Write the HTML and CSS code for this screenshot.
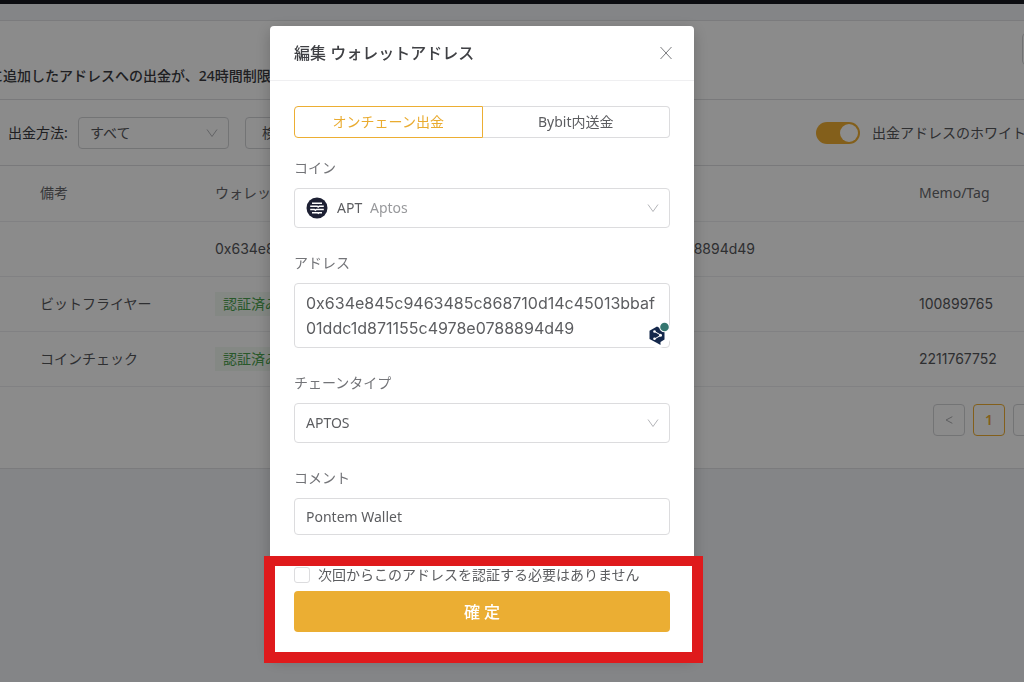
FILE: index.html
```html
<!DOCTYPE html>
<html lang="ja">
<head>
<meta charset="utf-8">
<meta name="viewport" content="width=device-width, initial-scale=1">
<title>ウォレットアドレス</title>
<link rel="stylesheet" href="styles.css">
</head>
<body>
<div class="page">
  <header class="topbar"></header>
  <main class="panel">
    <section class="banner">
      <p class="banner-text">に追加したアドレスへの出金が、24時間制限</p>
      <button class="banner-button" type="button" aria-label="追加"></button>
    </section>
    <section class="toolbar">
      <label class="toolbar-label" for="method">出金方法:</label>
      <span class="picker picker-small">
        <select id="method" class="picker-select"><option>すべて</option></select>
        <svg class="chevron" viewBox="0 0 12 12" aria-hidden="true"><path d="M1 2.5 6 9.5 11 2.5"/></svg>
      </span>
      <button class="search" type="button">検索</button>
      <div class="whitelist">
        <input class="switch" id="whitelist" type="checkbox" role="switch" checked>
        <label for="whitelist">出金アドレスのホワイトリスト</label>
      </div>
    </section>
    <table class="wallets">
      <colgroup><col class="col-note"><col><col class="col-memo"></colgroup>
      <thead><tr><th>備考</th><th>ウォレットアドレス</th><th>Memo/Tag</th></tr></thead>
      <tbody>
        <tr><td></td><td>0x634e845c9463485c868710d14c45013bbaf01ddc1d871155c4978e0788894d49</td><td></td></tr>
        <tr><td>ビットフライヤー</td><td><span class="tag">認証済み</span></td><td>100899765</td></tr>
        <tr><td>コインチェック</td><td><span class="tag">認証済み</span></td><td>2211767752</td></tr>
      </tbody>
    </table>
    <nav class="pages" aria-label="ページ">
      <button class="page-button" type="button" aria-label="前へ"><svg class="arrow" viewBox="0 0 12 12"><path d="M10 2 2.500 6 10 10"/></svg></button>
      <button class="page-button page-current" type="button">1</button>
      <button class="page-button" type="button" aria-label="次へ"><svg class="arrow" viewBox="0 0 12 12"><path d="M2 2 9.500 6 2 10"/></svg></button>
    </nav>
  </main>
</div>

<div class="overlay">
  <form class="modal" role="dialog" aria-labelledby="modal-title">
    <header class="modal-header">
      <h1 class="modal-title" id="modal-title">編集 ウォレットアドレス</h1>
      <button class="close" type="button" aria-label="閉じる"><svg viewBox="0 0 14 14"><path d="M1.500 1 12.500 13M12.500 1 1.500 13"/></svg></button>
    </header>
    <div class="modal-body">
      <div class="segments">
        <button class="segment segment-active" type="button">オンチェーン出金</button>
        <button class="segment" type="button">Bybit内送金</button>
      </div>
      <div class="field">
        <label for="coin">コイン</label>
        <span class="picker picker-coin">
          <select id="coin" class="picker-select"><option>APT</option></select>
          <span class="coin-name">Aptos</span>
          <svg class="coin-icon" viewBox="0 0 22 22" aria-hidden="true">
            <circle cx="11" cy="11" r="10.500" fill="#1d2033"/>
            <path d="M6 6.300h10M4.200 9.200h7l1 .9 1-.9h4.600M4.200 12.400h4.200l1 .9 1-.9h7.400M6 15.700h5.500l.8.600.8-.6H16" fill="none" stroke="#fff" stroke-width="1.500"/>
          </svg>
          <svg class="chevron" viewBox="0 0 12 12" aria-hidden="true"><path d="M1 2.500 6 9.500 11 2.500"/></svg>
        </span>
      </div>
      <div class="field">
        <label for="address">アドレス</label>
        <div class="address-box">
          <textarea id="address" class="address" rows="2" spellcheck="false">0x634e845c9463485c868710d14c45013bbaf01ddc1d871155c4978e0788894d49</textarea>
          <svg class="translate" viewBox="0 0 28 28" aria-hidden="true">
            <circle cx="14" cy="14" r="13" fill="#fff"/>
            <path d="M13 5.500 20.500 9.800V18.500L16.500 21V24L13 22 5.500 18V9.800Z" fill="#14284b"/>
            <path d="m10.500 10.500 6.500 3.700-6.500 3.800" fill="none" stroke="#fff" stroke-width="1"/>
            <circle cx="10.500" cy="10.500" r="1.300" fill="#fff"/><circle cx="16.500" cy="14.200" r="1.500" fill="#fff"/><circle cx="10.500" cy="17.800" r="1.300" fill="#fff"/>
            <circle cx="20.500" cy="6" r="5.300" fill="#fff"/><circle cx="20.500" cy="6" r="4.300" fill="#35766f"/>
          </svg>
        </div>
      </div>
      <div class="field">
        <label for="chain">チェーンタイプ</label>
        <span class="picker">
          <select id="chain" class="picker-select"><option>APTOS</option></select>
          <svg class="chevron" viewBox="0 0 12 12" aria-hidden="true"><path d="M1 2.500 6 9.500 11 2.500"/></svg>
        </span>
      </div>
      <div class="field">
        <label for="comment">コメント</label>
        <input id="comment" class="comment" type="text" value="Pontem Wallet">
      </div>
    </div>
    <footer class="modal-footer">
      <div class="agree">
        <input class="tick" id="skip" type="checkbox">
        <label for="skip">次回からこのアドレスを認証する必要はありません</label>
      </div>
      <button class="confirm" type="submit">確 定</button>
      <div class="highlight"></div>
    </footer>
  </form>
</div>
</body>
</html>
```
FILE: styles.css
```css
* { box-sizing: border-box; }

body {
  margin: 0;
  overflow: hidden;
  background: #f0f2f6;
  color: #55565a;
  font: 14px/20px "Noto Sans", "Noto Sans CJK JP", sans-serif;
}

button, input, select, textarea {
  font: inherit;
  color: inherit;
  margin: 0;
}

button { cursor: pointer; padding: 0; background: none; }
svg { display: block; fill: none; stroke: none; }

.page { min-height: 100vh; overflow: hidden; }
.topbar { height: 4px; background: #17181f; }

.panel {
  margin-top: 16px;
  background: #fdfdfd;
  border: solid #e0e1e4;
  border-width: 1px 0;
  overflow: hidden;
}

.banner {
  display: flex;
  justify-content: space-between;
  height: 79px;
  border-bottom: 1px solid #dcdde0;
  color: #3a3a3e;
}
.banner-text { margin: 0 0 13px -11px; align-self: flex-end; white-space: nowrap; font-weight: 500; }
.banner-button {
  flex: none;
  width: 100px;
  height: 32px;
  margin: 12px -98px 0 0;
  border: 1px solid #d0d1d4;
  border-radius: 4px;
}

.toolbar {
  display: flex;
  align-items: center;
  padding: 17px 0 16px 8px;
  border-bottom: 1px solid #dcdde0;
  white-space: nowrap;
}
.toolbar-label { width: 70px; color: #3a3a3e; }
.search {
  width: 100px;
  height: 32px;
  margin-left: 16px;
  padding-left: 16px;
  text-align: left;
  border: 1px solid #d2d3d6;
  border-radius: 4px;
}
.whitelist { display: flex; align-items: center; gap: 12px; width: 208px; margin-left: auto; }
.switch {
  appearance: none;
  flex: none;
  display: flex;
  justify-content: flex-end;
  width: 44px;
  height: 22px;
  padding: 2px;
  border-radius: 11px;
  background: #eeae32;
}
.switch::before { content: ""; width: 18px; height: 18px; border-radius: 50%; background: #fff; }

.picker { display: grid; align-items: center; }
.picker > * { grid-area: 1 / 1; }
.picker-select {
  appearance: none;
  width: 100%;
  height: 40px;
  padding: 0 11px;
  background: #fff;
  border: 1px solid #dcdcde;
  border-radius: 4px;
}
.picker-small { width: 151px; }
.picker-small .picker-select { height: 32px; background: none; border-color: #d2d3d6; }
.chevron {
  justify-self: end;
  width: 12px;
  height: 12px;
  margin-right: 11px;
  stroke: #b4b5b9;
  pointer-events: none;
}

.wallets { width: 100%; table-layout: fixed; border-collapse: collapse; }
.col-note { width: 207px; }
.col-memo { width: 113px; }
.wallets th, .wallets td {
  height: 55px;
  padding: 0 0 0 8px;
  border-bottom: 1px solid #ebecee;
  text-align: left;
  font-weight: 400;
  white-space: nowrap;
}
.wallets td { font-family: Inter, "Noto Sans CJK JP", sans-serif; }
.wallets th:first-child, .wallets td:first-child { padding-left: 40px; }
.wallets th { color: #66676b; }
.tag {
  display: inline-block;
  padding: 2px 8px;
  background: #f0f7f0;
  color: #4aa14d;
}

.pages { display: flex; justify-content: flex-end; gap: 8px; margin: 17px -21px 32px 0; }
.page-button {
  display: grid;
  place-items: center;
  width: 32px;
  height: 32px;
  border: 1px solid #d2d3d6;
  border-radius: 4px;
}
.page-current { border-color: #eeae32; color: #eeae32; font-weight: 600; }
.arrow { width: 10px; height: 10px; stroke: #9a9b9f; }

.overlay {
  position: fixed;
  inset: 0;
  display: flex;
  justify-content: center;
  align-items: flex-start;
  padding: 26px 60px 0 0;
  background: rgba(0, 0, 0, 0.45);
}
.modal {
  width: 424px;
  background: #fff;
  border-radius: 4px;
  box-shadow: 0 4px 16px rgba(0, 0, 0, 0.22);
  color: #5c5d60;
}
.modal-header {
  display: flex;
  align-items: center;
  justify-content: space-between;
  height: 55px;
  padding: 0 21px 0 24px;
  border-bottom: 1px solid #efeff1;
}
.modal-title { margin: 0; color: #3f4044; font-size: 16px; font-weight: 500; }
.close { width: 14px; height: 14px; border: 0; stroke: #7c7d80; }
.close svg { stroke: inherit; stroke-width: 1; }

.modal-body { display: flex; flex-direction: column; gap: 25px; padding: 25px 24px 30px; }
.segments { display: flex; margin-bottom: -5px; }
.segment {
  flex: 1;
  height: 32px;
  border: 1px solid #dcdcde;
  border-left: 0;
  border-radius: 0 4px 4px 0;
}
.segment-active { border: 1px solid #ecae33; border-radius: 4px 0 0 4px; color: #e9ab30; }

.field { display: grid; gap: 10px; }
.field label { color: #737478; }
.picker-coin .picker-select { padding-left: 42px; }
.coin-icon { width: 22px; height: 22px; margin-left: 12px; pointer-events: none; }
.coin-name { padding-left: 76px; color: #98999c; pointer-events: none; }

.address-box { position: relative; display: grid; }
.address {
  resize: none;
  padding: 7px 11px 6px;
  border: 1px solid #dcdcde;
  border-radius: 4px;
  font-family: Inter, sans-serif;
  font-size: 16px;
  line-height: 25px;
  word-break: break-all;
  overflow: hidden;
}
.translate { position: absolute; right: -2px; bottom: -1px; width: 28px; height: 28px; }
.comment { height: 37px; padding: 0 11px; border: 1px solid #dcdcde; border-radius: 4px; background: #fff; }

.modal-footer { position: relative; display: grid; gap: 6px; padding: 0 24px 24px; }
.agree { display: flex; align-items: center; gap: 8px; }
.tick {
  appearance: none;
  width: 16px;
  height: 16px;
  border: 1px solid #dcdcde;
  border-radius: 3px;
}
.confirm { height: 41px; border: 0; border-radius: 4px; background: #ebae33; color: #fff; font-size: 16px; font-weight: 500; }
.highlight {
  position: absolute;
  inset: -9px -9px -7px -6px;
  border: 11px solid #df1a1c;
  border-top-width: 10px;
  pointer-events: none;
}
```
